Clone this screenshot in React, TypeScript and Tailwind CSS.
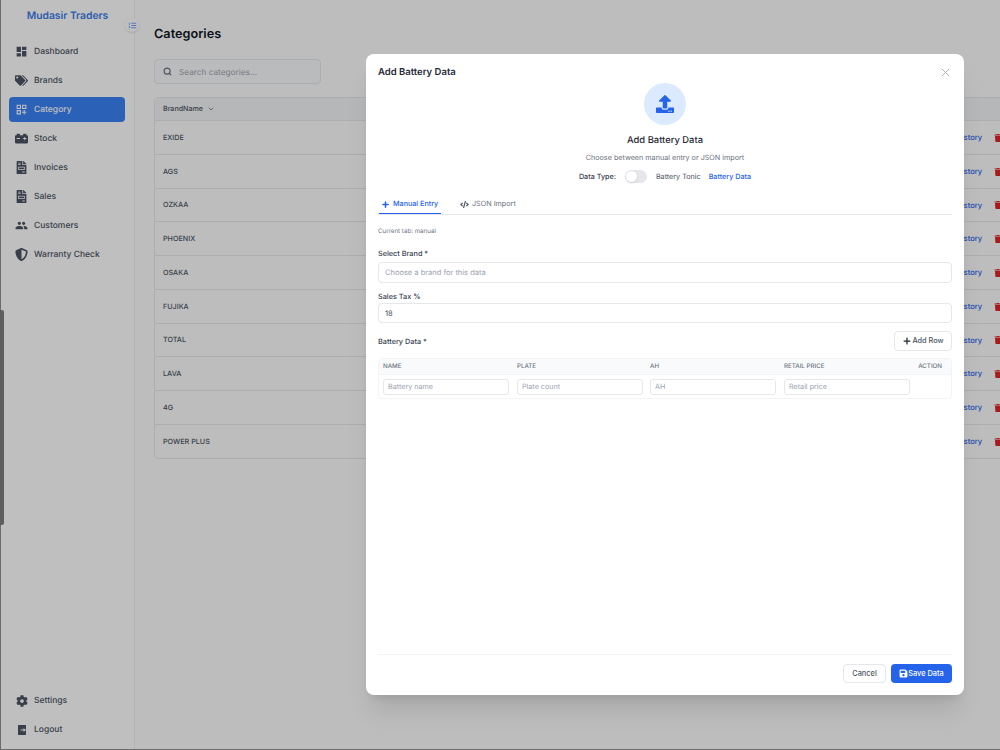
import { Search, ChevronDown, X, Plus } from "lucide-react";
import { MdDashboard, MdOutlineDashboardCustomize, MdPeople } from "react-icons/md";
import { FaTags, FaCarBattery, FaFileInvoice, FaShieldAlt, FaCog, FaUpload, FaSave, FaTrash, FaCode } from "react-icons/fa";
import { RiLogoutBoxRFill } from "react-icons/ri";
import { LuListCollapse } from "react-icons/lu";

const nav = [
  { label: "Dashboard", Icon: MdDashboard },
  { label: "Brands", Icon: FaTags },
  { label: "Category", Icon: MdOutlineDashboardCustomize, active: true },
  { label: "Stock", Icon: FaCarBattery },
  { label: "Invoices", Icon: FaFileInvoice },
  { label: "Sales", Icon: FaFileInvoice },
  { label: "Customers", Icon: MdPeople },
  { label: "Warranty Check", Icon: FaShieldAlt },
];

const brands = ["EXIDE", "AGS", "OZKAA", "PHOENIX", "OSAKA", "FUJIKA", "TOTAL", "LAVA", "4G", "POWER PLUS"];

function Sidebar() {
  return (
    <aside className="relative flex h-full w-[134px] shrink-0 flex-col border-r border-[#efefef] bg-white">
      <div className="pt-[8px] text-center text-[10.3px] font-semibold leading-[16px] text-[#3b7be8]">Mudasir Traders</div>
      <button className="absolute left-[124px] top-[18px] grid h-[14px] w-[14px] place-items-center rounded-full bg-white text-[#3b82f6] shadow">
        <LuListCollapse className="h-[9px] w-[9px]" />
      </button>
      <nav className="mt-[15px] flex flex-col gap-[4px] pl-[8px] pr-[9px]">
        {nav.map(({ label, Icon, active }) => (
          <div
            key={label}
            className={`flex h-[25px] items-center gap-[6px] rounded-[4px] pl-[6px] text-[8.5px] font-medium ${
              active ? "bg-[#3b82f6] text-white" : "text-[#4b5563]"
            }`}
          >
            <span className="grid w-[13px] place-items-center">
              <Icon className="h-[13px] w-[13px]" />
            </span>
            <span className="pt-[1px]">{label}</span>
          </div>
        ))}
      </nav>
      <div className="mt-auto flex flex-col gap-[4px] pl-[8px] pr-[9px] pb-[8px]">
        {[
          { label: "Settings", Icon: FaCog },
          { label: "Logout", Icon: RiLogoutBoxRFill },
        ].map(({ label, Icon }) => (
          <div key={label} className="flex h-[25px] items-center gap-[6px] pl-[6px] text-[8.5px] font-medium text-[#4b5563]">
            <span className="grid w-[13px] place-items-center">
              <Icon className="h-[12px] w-[12px]" />
            </span>
            <span className="pt-[1px]">{label}</span>
          </div>
        ))}
      </div>
    </aside>
  );
}

function Page() {
  return (
    <main className="min-w-0 flex-1 overflow-hidden bg-[#fdfdfd] pl-[19px] pt-[27px]">
      <h1 className="text-[12.7px] font-semibold leading-[16px] text-[#111827]">Categories</h1>
      <div className="mt-[16px] flex h-[25px] w-[167px] items-center gap-[7px] rounded-[4px] border border-[#e5e7eb] bg-[#f9fafb] pl-[8px] text-[8.25px] text-[#9ca3af]">
        <Search className="h-[9px] w-[9px] text-[#6b7280]" strokeWidth={3} />
        <span className="pt-[1px]">Search categories...</span>
      </div>
      <div className="mt-[13px] w-[1000px] rounded-[4px] border border-[#e5e7eb]">
        <div className="flex h-[22px] items-center gap-[4px] bg-[#f3f4f6] pl-[8px] text-[7.1px] font-medium text-[#4b5563]">
          BrandName <ChevronDown className="h-[8px] w-[8px]" />
        </div>
        {brands.map((b) => (
          <div key={b} className="flex h-[33.75px] items-center border-t border-[#e5e7eb] pl-[8px] pt-[1px] text-[7.2px] font-medium text-[#4b5563]">
            <span className="w-[793px] pt-[1px]">{b}</span>
            <span className="w-[38px] text-[7.6px] text-[#2563eb]">History</span>
            <FaTrash className="h-[8px] w-[8px] text-[#dc2626]" />
          </div>
        ))}
      </div>
    </main>
  );
}

function Field({ label, children }: { label: string; children: React.ReactNode }) {
  return (
    <div>
      <div className="pt-[1px] text-[7.3px] font-medium leading-[11px] text-[#374151]">{label}</div>
      {children}
    </div>
  );
}

function Modal() {
  const cols = ["Battery name", "Plate count", "AH", "Retail price"];
  return (
    <div className="flex h-[641px] w-[598px] flex-col rounded-[8px] bg-white px-[12px] shadow-xl">
      <div className="flex items-center justify-between pt-[12px]">
        <h2 className="text-[9.5px] font-semibold leading-[14px] text-[#1f2937]">Add Battery Data</h2>
        <X className="mb-[1px] h-[13px] w-[13px] text-[#9ca3af]" strokeWidth={1.5} />
      </div>
      <div className="flex flex-col items-center">
        <div className="mt-[3px] grid h-[42px] w-[42px] place-items-center rounded-full bg-[#dbeafe]">
          <FaUpload className="h-[18px] w-[18px] text-[#2563eb]" />
        </div>
        <div className="mt-[9px] text-[9.4px] font-medium leading-[14px] text-[#1f2937]">Add Battery Data</div>
        <div className="mt-[4px] text-[7.2px] leading-[12px] text-[#6b7280]">Choose between manual entry or JSON import</div>
        <div className="mt-[6px] flex items-center text-[7.2px] font-medium leading-[12px]">
          <span className="text-[#374151]">Data Type:</span>
          <span className="ml-[9px] flex h-[13px] w-[22px] items-center rounded-full bg-[#e5e7eb] px-[1px]">
            <span className="h-[11px] w-[11px] rounded-full bg-white shadow-sm" />
          </span>
          <span className="ml-[9px] font-normal text-[#4b5563]">Battery Tonic</span>
          <span className="ml-[8px] text-[#2563eb]">Battery Data</span>
        </div>
      </div>
      <div className="mt-[13px] flex border-b border-[#e5e7eb] text-[7.2px] font-medium">
        <div className="ml-[1px] flex h-[18px] w-[62px] items-center gap-[3px] whitespace-nowrap border-b border-[#2563eb] pb-[1px] pl-[2px] text-[#2563eb]">
          <Plus className="h-[9px] w-[9px]" strokeWidth={4} />
          Manual Entry
        </div>
        <div className="ml-[19px] flex items-center gap-[3px] pb-[1px] font-normal text-[#6b7280]">
          <FaCode className="h-[9px] w-[9px] text-[#4b5563]" />
          JSON Import
        </div>
      </div>
      <div className="mt-[11px] text-[6.2px] leading-[12px] text-[#6b7280]">Current tab: manual</div>
      <div className="mt-[9px]">
        <Field label="Select Brand *">
          <div className="mt-[3px] flex h-[21px] items-center rounded-[4px] border border-[#e5e7eb] pl-[6px] text-[7.5px] text-[#9ca3af]">
            Choose a brand for this data
          </div>
        </Field>
      </div>
      <div className="mt-[7px]">
        <Field label="Sales Tax %">
          <div className="mt-[1px] flex h-[20px] items-center rounded-[4px] border border-[#e5e7eb] pl-[6px] pt-[1px] text-[7.5px] text-[#374151]">
            18
          </div>
        </Field>
      </div>
      <div className="mt-[8px] flex items-center justify-between">
        <div className="pt-[1px] text-[7.3px] font-medium leading-[12px] text-[#374151]">Battery Data *</div>
        <button className="flex h-[20px] w-[58px] items-center justify-center rounded-[4px] border border-[#e5e7eb] text-[7.3px] font-medium text-[#4b5563]">
          <Plus className="h-[10px] w-[10px] text-[#1f2937]" strokeWidth={3} />
          Add Row
        </button>
      </div>
      <div className="mt-[7px] rounded-[4px] border border-[#f3f4f6]">
        <div className="grid h-[15px] grid-cols-[134px_133px_134px_134px_1fr] items-center bg-[#f9fafb] pl-[4px] pr-[9px] text-[6.2px] font-medium uppercase text-[#6b7280]">
          <span>Name</span>
          <span>Plate</span>
          <span>AH</span>
          <span>Retail Price</span>
          <span className="text-right">Action</span>
        </div>
        <div className="grid h-[24px] grid-cols-[134px_133px_134px_134px_1fr] items-center border-t border-[#f3f4f6] pl-[4px]">
          {cols.map((c) => (
            <div key={c} className="flex h-[16px] w-[126px] items-center rounded-[3px] border border-[#e5e7eb] pl-[4px] pt-[1px] text-[7.2px] text-[#9ca3af]">
              {c}
            </div>
          ))}
        </div>
      </div>
      <div className="mt-auto flex justify-end gap-[5px] border-t border-[#f3f4f6] pb-[12px] pt-[9px]">
        <button className="h-[19px] w-[43px] rounded-[4px] border border-[#e5e7eb] text-[7.4px] font-medium text-[#4b5563]">Cancel</button>
        <button className="flex h-[19px] w-[61px] items-center justify-center rounded-[4px] bg-[#2563eb] text-[7.4px] font-medium text-white">
          <FaSave className="h-[9px] w-[9px]" />
          Save Data
        </button>
      </div>
    </div>
  );
}

export default function App() {
  return (
    <div className="relative h-[750px] w-[1000px] overflow-hidden font-['Inter',sans-serif] [text-rendering:geometricPrecision]">
      <div className="flex h-full pl-[1px]">
        <Sidebar />
        <Page />
      </div>
      {/* dimmed backdrop over the page, dialog sits on top */}
      <div className="absolute inset-0 flex items-start justify-center bg-black/25 pl-[330px] pt-[54px]">
        <Modal />
      </div>
      {/* window edges and the drag handle at the left */}
      <div className="absolute inset-y-0 left-0 w-[1px] bg-[#6b6b6b]" />
      <div className="absolute inset-x-0 bottom-0 h-[1px] bg-[#6b6b6b]" />
      <div className="absolute left-0 top-[310px] h-[215px] w-[4px] rounded-r-[2px] bg-[#5f5f5f]" />
    </div>
  );
}
